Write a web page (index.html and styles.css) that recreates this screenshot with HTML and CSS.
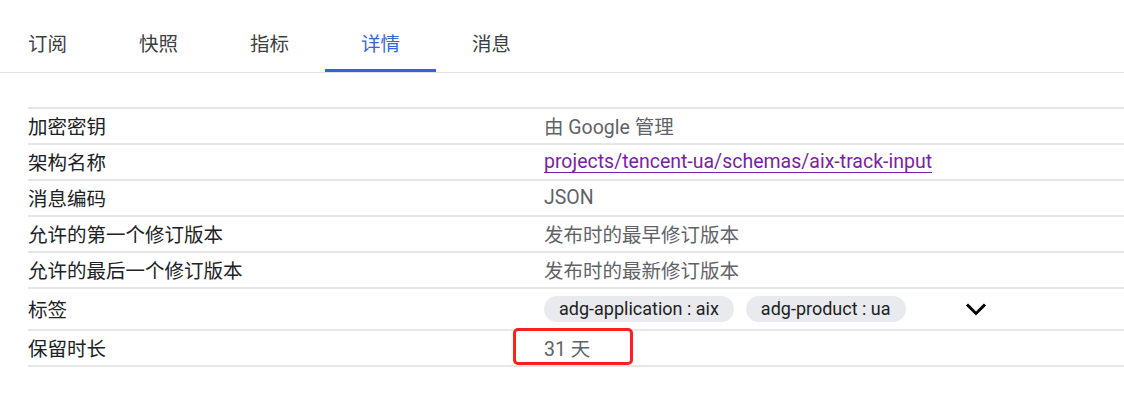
FILE: index.html
```html
<!DOCTYPE html>
<html lang="zh">
<head>
<meta charset="utf-8">
<link rel="stylesheet" href="styles.css">
</head>
<body>
<nav class="tabs">
  <div class="tab">订阅</div>
  <div class="tab">快照</div>
  <div class="tab">指标</div>
  <div class="tab active">详情</div>
  <div class="tab">消息</div>
</nav>
<section class="details">
  <div class="row"><div class="label">加密密钥</div><div class="value">由 Google 管理</div></div>
  <div class="row"><div class="label">架构名称</div><div class="value"><a class="link" href="#">projects/tencent-ua/schemas/aix-track-input</a></div></div>
  <div class="row"><div class="label">消息编码</div><div class="value">JSON</div></div>
  <div class="row"><div class="label">允许的第一个修订版本</div><div class="value">发布时的最早修订版本</div></div>
  <div class="row"><div class="label">允许的最后一个修订版本</div><div class="value">发布时的最新修订版本</div></div>
  <div class="row row-tags"><div class="label">标签</div>
    <div class="value chips">
      <span class="chip">adg-application : aix</span>
      <span class="chip">adg-product : ua</span>
      <svg class="chevron" width="24" height="16" viewBox="0 0 24 16"><path d="M3 3.5 L12 12.5 L21 3.5" fill="none" stroke="#000" stroke-width="3"/></svg>
    </div>
  </div>
  <div class="row"><div class="label">保留时长</div><div class="value highlight">31 天<span class="mark"></span></div></div>
</section>
</body>
</html>
```

FILE: styles.css
```css
html, body {
  margin: 0;
  padding: 0;
  background: #fff;
}
body {
  font-family: Roboto, "Noto Sans CJK SC", sans-serif;
  font-size: 19.5px;
  color: #202124;
}
.tabs {
  display: flex;
  height: 72px;
  margin-left: -8px;
  border-bottom: 1px solid #e0e0e0;
}
.tab {
  width: 111px;
  box-sizing: border-box;
  display: flex;
  justify-content: center;
  padding-top: 32px;
  line-height: 26px;
  color: #3c4043;
  border-bottom: 3px solid transparent;
}
.tab.active {
  color: #3367d6;
  border-bottom-color: #3367d6;
}
.details {
  margin: 34px 0 0 28px;
  border-top: 2px solid #e6e6e6;
}
.row {
  display: flex;
  align-items: center;
  height: 34px;
  border-bottom: 2px solid #e6e6e6;
}
.row-tags {
  height: 40px;
}
.label {
  width: 516px;
  flex: none;
  color: #202124;
  margin-top: -1px;
}
.value {
  color: #5f6368;
  position: relative;
  margin-top: -1px;
}
.link {
  color: #7b1fa2;
  text-decoration: underline;
  text-underline-offset: 4px;
  text-decoration-thickness: 1px;
}
.chips {
  display: flex;
  align-items: center;
  gap: 12px;
}
.chip {
  display: inline-flex;
  align-items: center;
  height: 26px;
  padding: 0 15px;
  border-radius: 13px;
  background: #e8eaed;
  color: #202124;
  font-size: 18px;
}
.chevron {
  margin-left: 46px;
}
.mark {
  position: absolute;
  left: -31px;
  top: -5px;
  width: 114px;
  height: 31px;
  border: 3px solid #ff1f1f;
  border-radius: 5px;
}
```
